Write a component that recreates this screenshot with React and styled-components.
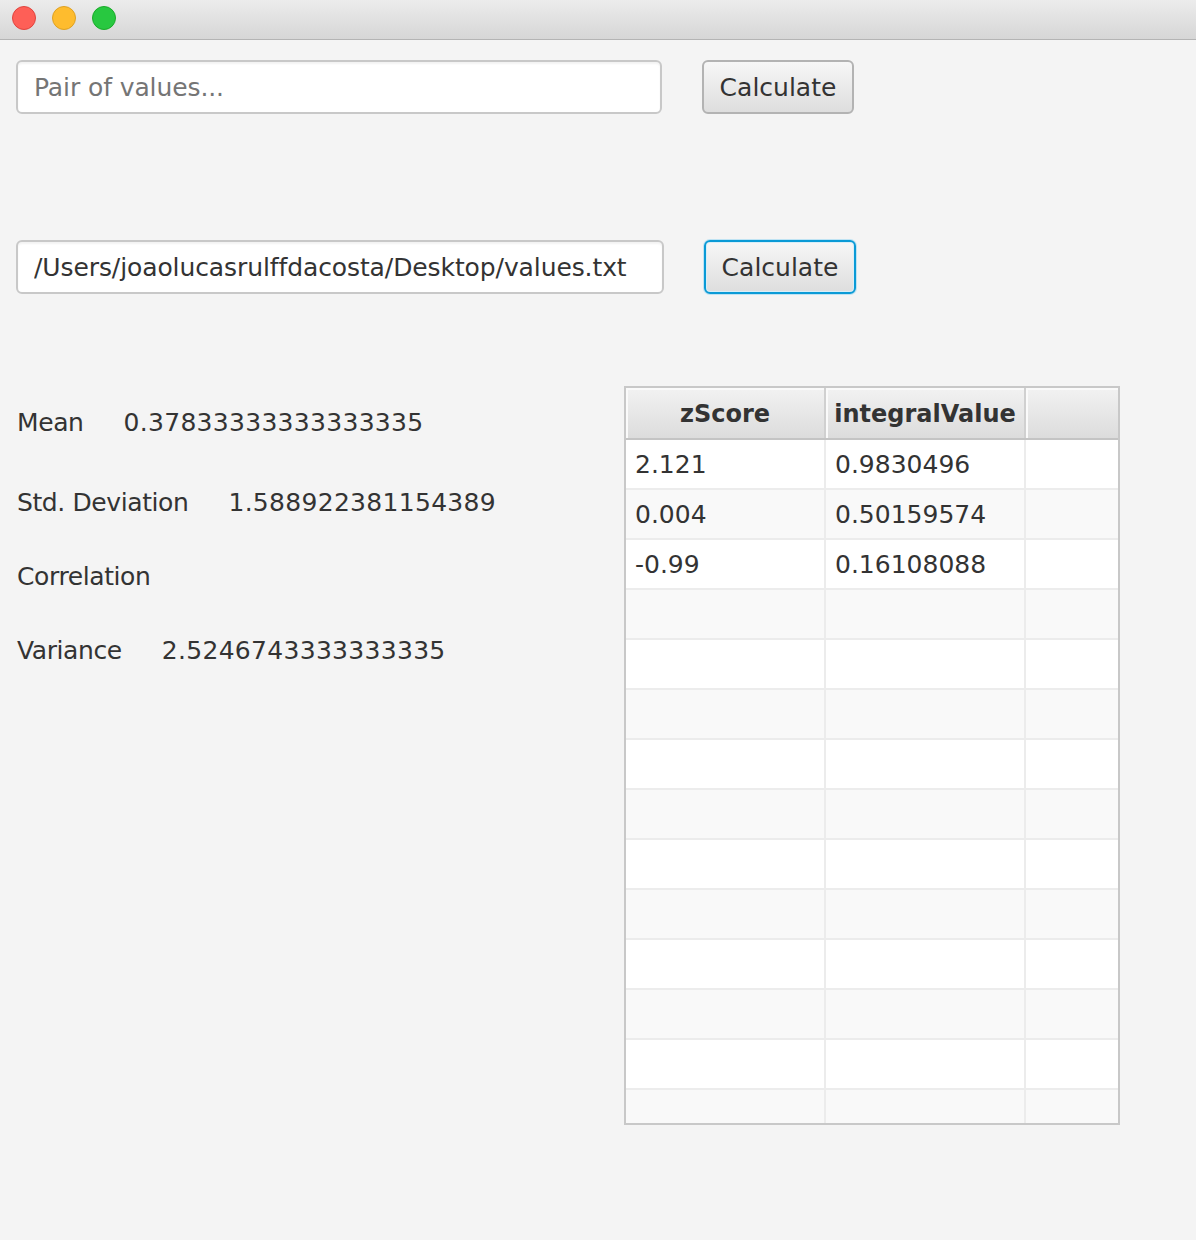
import React from "react";
import styled, { createGlobalStyle } from "styled-components";

const GlobalStyle = createGlobalStyle`
  html, body {
    margin: 0;
    padding: 0;
    background: #f4f4f4;
  }
  * {
    box-sizing: border-box;
  }
`;

const Window = styled.div`
  width: 1196px;
  height: 1240px;
  background: #f4f4f4;
  font-family: "DejaVu Sans", "Liberation Sans", sans-serif;
  font-size: 25px;
  color: #333;
  overflow: hidden;
`;

const TitleBar = styled.div`
  height: 40px;
  display: flex;
  align-items: center;
  gap: 16px;
  padding: 0 0 4px 12px;
  background: linear-gradient(#ececec, #d6d6d6);
  border-bottom: 1px solid #b4b4b4;
`;

const Light = styled.span`
  width: 24px;
  height: 24px;
  border-radius: 50%;
  background: ${p => p.color};
  border: 1px solid ${p => p.edge};
`;

const Content = styled.div`
  padding: 20px 0 0 16px;
`;

const FieldRow = styled.div`
  display: flex;
  align-items: center;
  gap: 40px;
  margin-bottom: ${p => p.after}px;
`;

const TextField = styled.input`
  width: ${p => p.w}px;
  height: 54px;
  padding: 0 16px;
  border: 2px solid #c8c8c8;
  border-radius: 6px;
  background: #fff;
  box-shadow: inset 0 2px 2px rgba(0, 0, 0, 0.05);
  font-family: inherit;
  font-size: 25px;
  letter-spacing: -0.1px;
  color: #333;
  outline: none;

  ::placeholder {
    color: #a3a3a3;
  }
`;

const Button = styled.button`
  width: 152px;
  height: 54px;
  border-radius: 6px;
  border: 2px solid ${p => (p.focused ? "#0a9ad6" : "#b3b3b3")};
  box-shadow: ${p =>
    p.focused ? "0 0 0 1px #bfe3f3, inset 0 0 0 1px #d8eef8" : "none"};
  background: linear-gradient(#f7f7f7, #dedede);
  font-family: inherit;
  font-size: 25px;
  color: #333;
  padding: 0;
`;

const Lower = styled.div`
  display: flex;
  align-items: flex-start;
`;

const Stats = styled.div`
  width: 608px;
  padding-top: 22px;
`;

const StatRow = styled.div`
  display: flex;
  gap: 40px;
  height: 30px;
  line-height: 30px;
  margin-top: ${p => p.top}px;
  padding-left: 1px;
`;

const Label = styled.span`
  letter-spacing: -0.4px;
`;

const Value = styled.span`
  letter-spacing: 0.3px;
`;

const Table = styled.div`
  width: 496px;
  height: 739px;
  border: 2px solid #c8c8c8;
  overflow: hidden;
  background: #fff;
`;

const Row = styled.div`
  display: grid;
  grid-template-columns: 200px 200px 1fr;
  height: ${p => (p.head ? 52 : 50)}px;
  background: ${p =>
    p.head ? "linear-gradient(#f2f2f2, #dcdcdc)" : p.odd ? "#f9f9f9" : "#fff"};
  border-bottom: 2px solid ${p => (p.head ? "#c4c4c4" : "#ececec")};
`;

const Cell = styled.div`
  display: flex;
  align-items: center;
  justify-content: ${p => (p.head ? "center" : "flex-start")};
  padding: ${p => (p.head ? "2px 0 0 0" : "0 0 0 9px")};
  font-size: ${p => (p.head ? 24 : 25)}px;
  font-weight: ${p => (p.head ? 700 : 400)};
  border-right: 2px solid ${p => (p.head ? "#d0d0d0" : "#ececec")};
  box-shadow: ${p => (p.head ? "inset 2px 2px 0 #fafafa" : "none")};

  &:last-child {
    border-right: none;
  }
`;

const data = [
  ["2.121", "0.9830496"],
  ["0.004", "0.50159574"],
  ["-0.99", "0.16108088"],
];

export default function App() {
  const rows = Array.from({ length: 14 }, (_, i) => data[i] || ["", ""]);

  return (
    <Window>
      <GlobalStyle />
      <TitleBar>
        <Light color="#fe5f57" edge="#e0443e" />
        <Light color="#febc2e" edge="#dea123" />
        <Light color="#28c840" edge="#1aab29" />
      </TitleBar>
      <Content>
        <FieldRow after={126}>
          <TextField w={646} placeholder="Pair of values..." />
          <Button>Calculate</Button>
        </FieldRow>
        <FieldRow after={92}>
          <TextField w={648} defaultValue="/Users/joaolucasrulffdacosta/Desktop/values.txt" />
          <Button focused>Calculate</Button>
        </FieldRow>
        <Lower>
          <Stats>
            <StatRow top={0}>
              <Label>Mean</Label>
              <Value>0.37833333333333335</Value>
            </StatRow>
            <StatRow top={50}>
              <Label>Std. Deviation</Label>
              <Value>1.588922381154389</Value>
            </StatRow>
            <StatRow top={44}>
              <Label>Correlation</Label>
            </StatRow>
            <StatRow top={44}>
              <Label>Variance</Label>
              <Value>2.5246743333333335</Value>
            </StatRow>
          </Stats>
          <Table>
            <Row head>
              <Cell head>zScore</Cell>
              <Cell head>integralValue</Cell>
              <Cell head />
            </Row>
            {rows.map((r, i) => (
              <Row key={i} odd={i % 2 === 1}>
                <Cell>{r[0]}</Cell>
                <Cell>{r[1]}</Cell>
                <Cell />
              </Row>
            ))}
          </Table>
        </Lower>
      </Content>
    </Window>
  );
}
